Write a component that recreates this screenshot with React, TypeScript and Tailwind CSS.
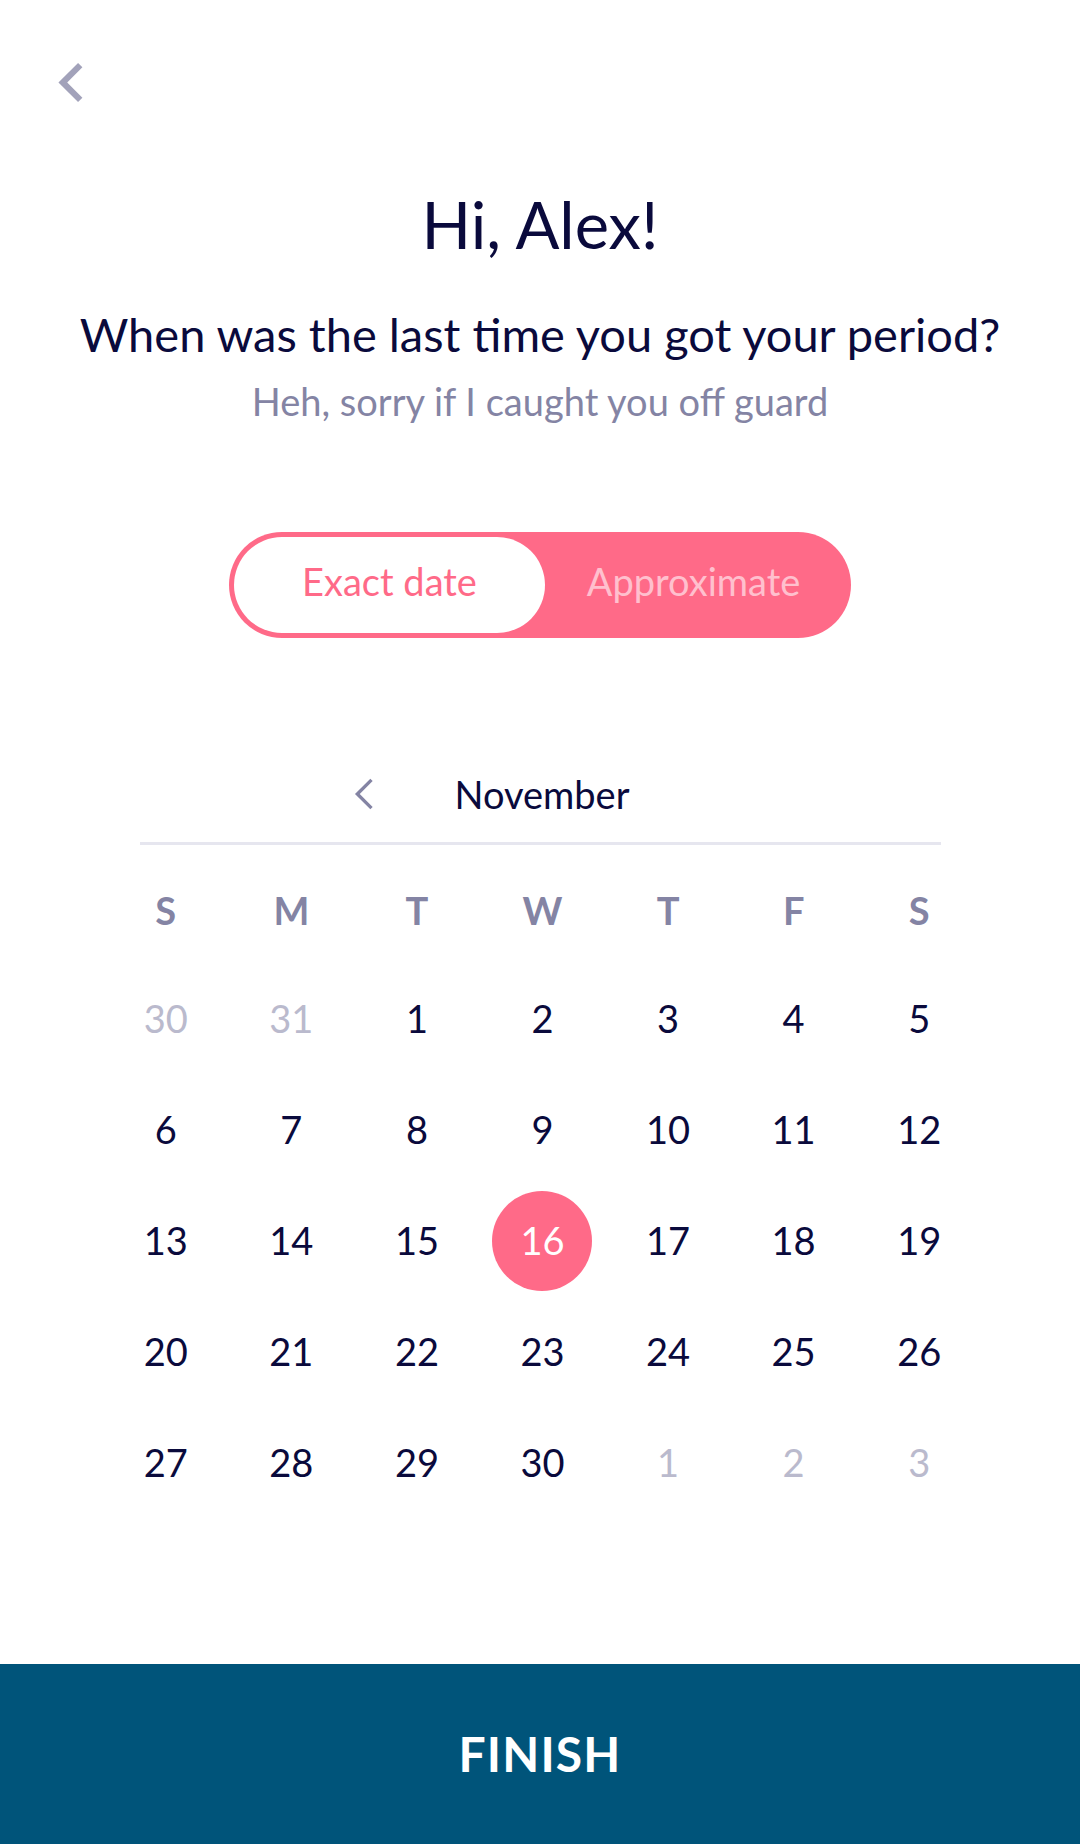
import { ReactNode } from "react";

const days: { d: number; muted?: boolean; selected?: boolean }[] = [
  { d: 30, muted: true },
  { d: 31, muted: true },
  ...Array.from({ length: 30 }, (_, i) => ({ d: i + 1, selected: i + 1 === 16 })),
  { d: 1, muted: true },
  { d: 2, muted: true },
  { d: 3, muted: true },
];

const weekdays = ["S", "M", "T", "W", "T", "F", "S"];

function Chevron({ className, stroke = 6 }: { className?: string; stroke?: number }) {
  return (
    <svg className={className} viewBox="0 0 24 40" fill="none">
      <polyline points="21,3 4,20 21,37" stroke="currentColor" strokeWidth={stroke} strokeLinejoin="miter" />
    </svg>
  );
}

function Cell({ children }: { children: ReactNode }) {
  return <div className="flex items-center justify-center h-[111px]">{children}</div>;
}

export default function App() {
  return (
    <div
      className="w-[1080px] h-[1844px] flex flex-col bg-white text-[#0a0a3c]"
      style={{ fontFamily: "Lato, 'Open Sans', sans-serif" }}
    >
      {/* Header */}
      <div className="h-[164px] pt-[62px] pl-[58px]">
        <Chevron className="w-[26px] h-[41px] text-[#a2a2ba]" />
      </div>

      <h1 className="text-center text-[65px] leading-[120px]">Hi, Alex!</h1>
      <p className="mt-[22px] text-center text-[47px] leading-[56px]">
        When was the last time you got your period?
      </p>
      <p className="mt-[16px] text-center text-[38px] leading-[46px] text-[#8484a4]">
        Heh, sorry if I caught you off guard
      </p>

      {/* Toggle */}
      <div className="mt-[108px] mx-auto w-[622px] h-[106px] rounded-full bg-[#ff6a88] p-[5px] flex">
        <div className="w-[311px] h-full pb-[8px] rounded-full bg-white flex items-center justify-center text-[38px] text-[#ff6a88]">
          Exact date
        </div>
        <div className="flex-1 pb-[8px] pr-[4px] flex items-center justify-center text-[38px] text-[#ffc0ce]">
          Approximate
        </div>
      </div>

      {/* Month */}
      <div className="mt-[126px] h-[60px] grid grid-cols-[1fr_auto_1fr] items-center">
        <div className="justify-self-end mr-[76px]">
          <Chevron className="w-[20px] h-[34px] text-[#8484a4] block" stroke={4} />
        </div>
        <div className="text-[38px] ml-[4px]">November</div>
        <div />
      </div>
      <div className="mt-[18px] mx-auto w-[801px] h-[3px] bg-[#e6e6ef]" />

      {/* Calendar */}
      <div className="ml-[103px] w-[879px] grid grid-cols-7">
        {weekdays.map((w, i) => (
          <div key={i} className="flex items-center justify-center h-[106px] mt-[12px] text-[38px] font-bold text-[#8484a4]">
            {w}
          </div>
        ))}
        {days.map((day, i) => (
          <Cell key={i}>
            {day.selected ? (
              <div className="w-[100px] h-[100px] rounded-full bg-[#ff6a88] text-white flex items-center justify-center text-[38px]">
                {day.d}
              </div>
            ) : (
              <span className={`text-[38px] ${day.muted ? "text-[#babacd]" : ""}`}>{day.d}</span>
            )}
          </Cell>
        ))}
      </div>

      {/* Footer */}
      <button className="mt-auto h-[180px] w-full bg-[#00547a] text-white text-[48px] font-bold tracking-wide flex items-center justify-center">
        FINISH
      </button>
    </div>
  );
}
